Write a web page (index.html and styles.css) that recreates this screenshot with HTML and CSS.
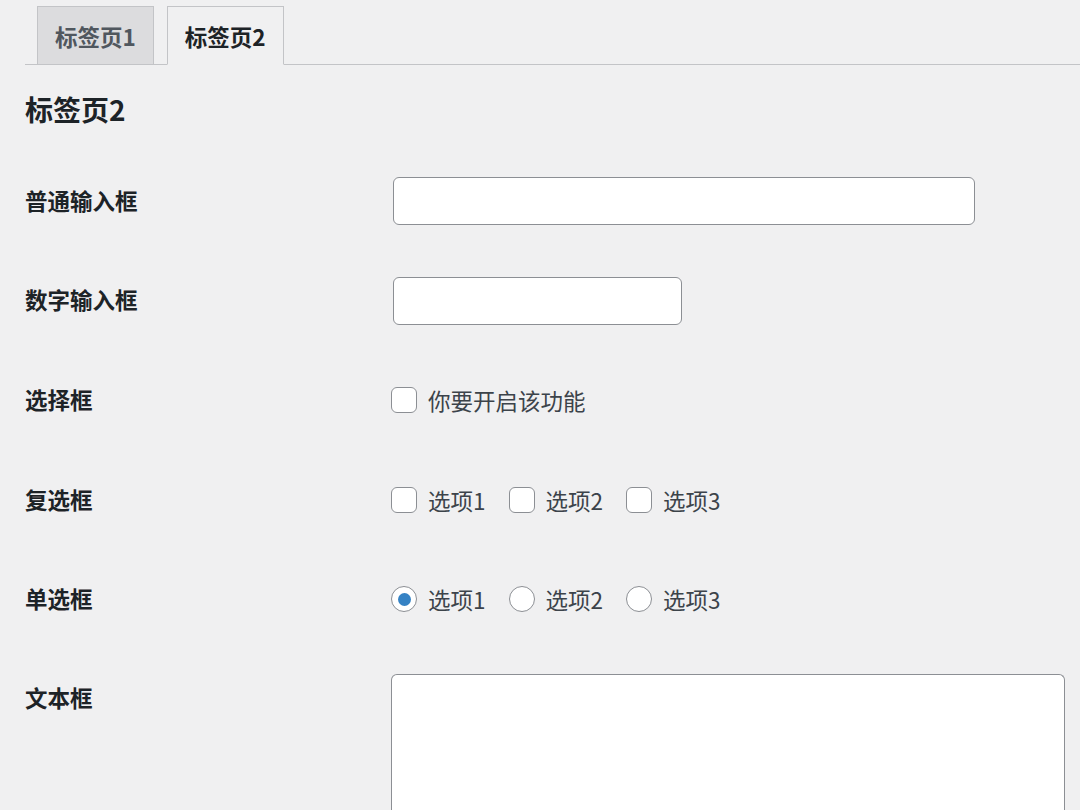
FILE: index.html
```html
<!DOCTYPE html>
<html lang="zh-CN">
<head>
<meta charset="utf-8">
<link rel="stylesheet" href="styles.css">
</head>
<body>
<div class="wrap">
  <nav class="tabs">
    <a class="tab">标签页1</a>
    <a class="tab active">标签页2</a>
  </nav>
  <h2 class="title">标签页2</h2>
  <div class="form">
    <div class="row">
      <div class="label">普通输入框</div>
      <div class="field"><input class="text regular" type="text"></div>
    </div>
    <div class="row">
      <div class="label">数字输入框</div>
      <div class="field"><input class="text small" type="text"></div>
    </div>
    <div class="row">
      <div class="label">选择框</div>
      <div class="field">
        <label class="opt"><input class="check" type="checkbox"><span>你要开启该功能</span></label>
      </div>
    </div>
    <div class="row">
      <div class="label">复选框</div>
      <div class="field">
        <label class="opt"><input class="check" type="checkbox"><span>选项1</span></label>
        <label class="opt"><input class="check" type="checkbox"><span>选项2</span></label>
        <label class="opt"><input class="check" type="checkbox"><span>选项3</span></label>
      </div>
    </div>
    <div class="row">
      <div class="label">单选框</div>
      <div class="field">
        <label class="opt"><input class="radio" type="radio" name="r" checked><span>选项1</span></label>
        <label class="opt"><input class="radio" type="radio" name="r"><span>选项2</span></label>
        <label class="opt"><input class="radio" type="radio" name="r"><span>选项3</span></label>
      </div>
    </div>
    <div class="row top">
      <div class="label">文本框</div>
      <div class="field"><textarea class="area"></textarea></div>
    </div>
  </div>
</div>
</body>
</html>
```
FILE: styles.css
```css
html, body {
  margin: 0;
  padding: 0;
  background: #f0f0f1;
  overflow: hidden;
}
body {
  font-family: "Noto Sans CJK SC", "Noto Sans", sans-serif;
  color: #3c434a;
  width: 1080px;
  height: 810px;
}
.wrap {
  padding-left: 25px;
}
.tabs {
  display: flex;
  align-items: flex-end;
  padding-top: 6px;
  padding-left: 12px;
  border-bottom: 1px solid #c3c4c7;
  height: 58px;
}
.tab {
  box-sizing: border-box;
  height: 59px;
  margin-bottom: -1px;
  padding: 0 17px;
  display: flex;
  align-items: center;
  font-size: 22.5px;
  font-weight: 700;
  color: #50575e;
  background: #dcdcde;
  border: 1px solid #c3c4c7;
  margin-right: 13px;
}
.tab.active {
  background: #f0f0f1;
  color: #1d2327;
  border-bottom-color: #f0f0f1;
}
.title {
  margin: 26px 0 24px;
  font-size: 28px;
  line-height: 36px;
  font-weight: 700;
  color: #1d2327;
}
.row {
  display: grid;
  grid-template-columns: 366px 1fr;
  height: 99.6px;
  align-items: center;
}
.row.top {
  align-items: start;
  height: 160px;
  padding-top: 25px;
}
.row.top .label {
  padding-top: 10px;
}
.label {
  font-size: 22.5px;
  font-weight: 700;
  color: #1d2327;
  line-height: 30px;
  margin-top: -2px;
}
.field {
  display: flex;
  align-items: center;
}
.text {
  box-sizing: border-box;
  height: 48px;
  margin: 1px 0 0 2px;
  border: 1.5px solid #8c8f94;
  border-radius: 6px;
  background: #fff;
  padding: 0 12px;
  outline: none;
}
.text.regular { width: 582px; }
.text.small { width: 289px; }
.opt {
  display: flex;
  align-items: center;
  font-size: 22.5px;
  color: #3c434a;
  margin-right: 23px;
  line-height: 30px;
}
.opt span { margin-left: 11px; }
.check, .radio {
  appearance: none;
  -webkit-appearance: none;
  box-sizing: border-box;
  width: 26px;
  height: 26px;
  margin: 0;
  border: 1.5px solid #8c8f94;
  background: #fff;
  position: relative;
}
.check { border-radius: 6px; }
.radio { border-radius: 50%; }
.radio:checked::before {
  content: "";
  position: absolute;
  left: 50%;
  top: 50%;
  width: 13px;
  height: 13px;
  margin: -6.5px 0 0 -6.5px;
  border-radius: 50%;
  background: #3582c4;
}
.area {
  box-sizing: border-box;
  display: block;
  width: 674px;
  height: 136px;
  border: 1.5px solid #8c8f94;
  border-bottom: none;
  border-radius: 6px 6px 0 0;
  background: #fff;
  resize: none;
  outline: none;
}
```
